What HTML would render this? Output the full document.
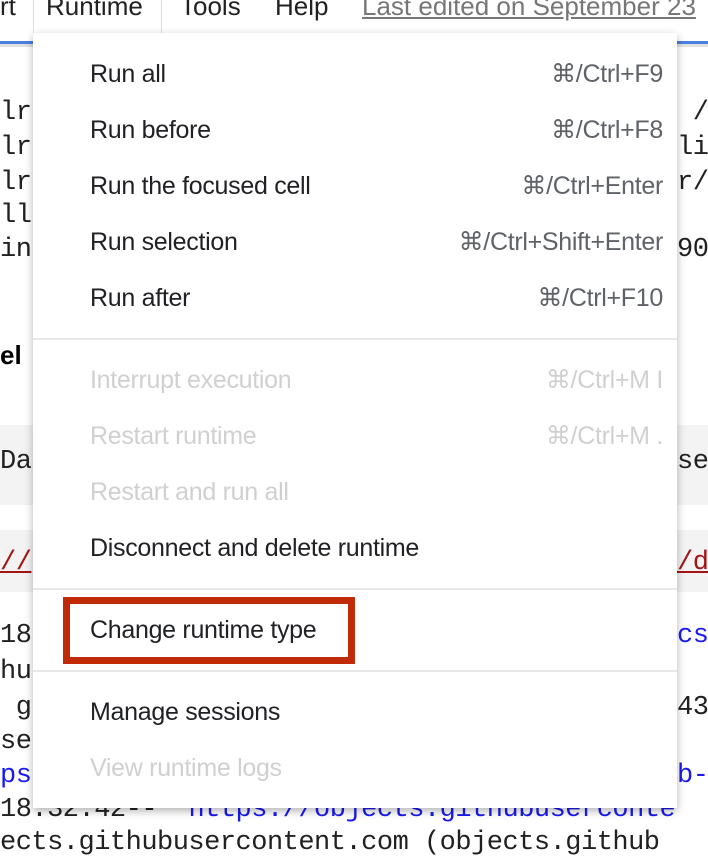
<!DOCTYPE html>
<html><head><style>
body{margin:0;width:708px;height:848px;overflow:hidden;background:#fff;position:relative;font-family:"Liberation Sans",sans-serif;}
.a{position:absolute;white-space:pre;}
.m{font-family:"Liberation Mono",monospace;font-size:27px;color:#212121;letter-spacing:-0.5px;}
.top{font-size:26px;color:#212121;top:-9px;}
.menu{position:absolute;left:33px;top:33px;width:644px;height:775px;background:#fff;box-shadow:0 3px 8px rgba(0,0,0,.3);}
.it{position:absolute;left:57px;font-size:25px;color:#202124;line-height:28px;letter-spacing:-0.3px;}
.sc{position:absolute;right:14px;font-size:25px;color:#5f6368;line-height:28px;letter-spacing:-0.3px;}
.dis{color:#d0d0d0!important;}
.hr{position:absolute;left:0;right:0;height:2px;background:#e8e8e8;}
a{color:#1a1aee;}
</style></head><body>
<div class="a top" style="left:0">rt</div>
<div class="a top" style="left:180px">Tools</div>
<div class="a top" style="left:275px">Help</div>
<div class="a top" style="left:362px;color:#777;text-decoration:underline">Last edited on September 23</div>
<div class="a" style="left:0;top:41px;width:708px;height:3px;background:#4a7fe0"></div>
<div class="a" style="left:0;top:44px;width:708px;height:3px;background:#e0e0e0"></div>
<div class="a" style="left:0;top:425px;width:708px;height:80px;background:#f3f3f3"></div>
<div class="a" style="left:0;top:530px;width:708px;height:62px;background:#f3f3f3"></div>
<div class="a m" style="left:0;top:98px">lr</div>
<div class="a m" style="left:0;top:133px">lr</div>
<div class="a m" style="left:0;top:168px">lr</div>
<div class="a m" style="left:0;top:201px">ll</div>
<div class="a m" style="left:0;top:235px">in</div>
<div class="a" style="left:0;top:340px;font-size:26px;font-weight:bold">el</div>
<div class="a m" style="left:0;top:447px">Da</div>
<div class="a m" style="left:0;top:548px;color:#a31515;text-decoration:underline">//</div>
<div class="a m" style="left:0;top:621px">18</div>
<div class="a m" style="left:0;top:657px">hu</div>
<div class="a m" style="left:0;top:693px"> g</div>
<div class="a m" style="left:0;top:727px">se</div>
<div class="a m" style="left:0;top:761px"><a>ps</a></div>
<div class="a m" style="left:0;top:795px">18:32:42--  <a>https://objects.githubuserconte</a></div>
<div class="a m" style="left:0;top:828px">ects.githubusercontent.com (objects.github</div>
<div class="a m" style="left:677px;top:98px"> /</div>
<div class="a m" style="left:677px;top:133px">li</div>
<div class="a m" style="left:677px;top:168px">r/</div>
<div class="a m" style="left:677px;top:235px">90</div>
<div class="a m" style="left:677px;top:447px">se</div>
<div class="a m" style="left:677px;top:548px;color:#a31515;text-decoration:underline">/d</div>
<div class="a m" style="left:677px;top:621px"><a>cs</a></div>
<div class="a m" style="left:677px;top:693px">43</div>
<div class="a m" style="left:677px;top:761px"><a>b-</a></div>
<div class="a" style="left:33px;top:0;width:129px;height:42px;background:#fff;border:1px solid #ddd;border-top:0;box-sizing:border-box"></div>
<div class="a top" style="left:46px">Runtime</div>
<div class="menu">
<div class="it" style="top:27px">Run all</div><div class="sc" style="top:27px">⌘/Ctrl+F9</div>
<div class="it" style="top:83px">Run before</div><div class="sc" style="top:83px">⌘/Ctrl+F8</div>
<div class="it" style="top:139px">Run the focused cell</div><div class="sc" style="top:139px">⌘/Ctrl+Enter</div>
<div class="it" style="top:195px">Run selection</div><div class="sc" style="top:195px">⌘/Ctrl+Shift+Enter</div>
<div class="it" style="top:251px">Run after</div><div class="sc" style="top:251px">⌘/Ctrl+F10</div>
<div class="hr" style="top:305px"></div>
<div class="it dis" style="top:333px">Interrupt execution</div><div class="sc dis" style="top:333px">⌘/Ctrl+M I</div>
<div class="it dis" style="top:389px">Restart runtime</div><div class="sc dis" style="top:389px">⌘/Ctrl+M .</div>
<div class="it dis" style="top:445px">Restart and run all</div>
<div class="it" style="top:501px">Disconnect and delete runtime</div>
<div class="hr" style="top:555px"></div>
<div class="it" style="top:583px">Change runtime type</div>
<div class="a" style="left:30px;top:564px;width:292px;height:67px;border:7px solid #c02a07;box-sizing:border-box"></div>
<div class="hr" style="top:637px"></div>
<div class="it" style="top:665px">Manage sessions</div>
<div class="it dis" style="top:721px">View runtime logs</div>
</div>
</body></html>
